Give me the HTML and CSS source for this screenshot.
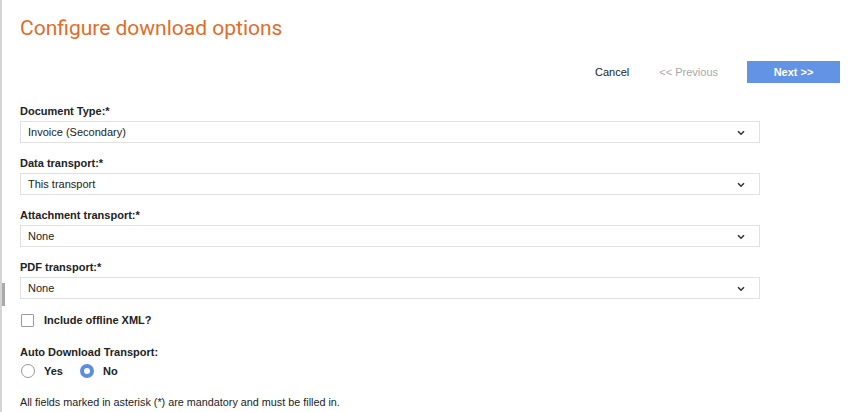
FILE: index.html
```html
<!DOCTYPE html>
<html>
<head>
<meta charset="utf-8">
<link rel="stylesheet" href="styles.css">
</head>
<body>
<div class="page">
  <div class="side-handle"></div>
  <h1 class="title">Configure download options</h1>
  <div class="actions">
    <button class="btn btn-link">Cancel</button>
    <button class="btn btn-link disabled">&lt;&lt; Previous</button>
    <button class="btn btn-primary">Next &gt;&gt;</button>
  </div>
  <form class="form">
    <div class="field">
      <label class="label">Document Type:*</label>
      <div class="select"><span>Invoice (Secondary)</span><svg class="chev" viewBox="0 0 8 6" width="8" height="6"><path d="M1 1.2 L4 4.2 L7 1.2" fill="none" stroke="#333" stroke-width="1.6"/></svg></div>
    </div>
    <div class="field">
      <label class="label">Data transport:*</label>
      <div class="select"><span>This transport</span><svg class="chev" viewBox="0 0 8 6" width="8" height="6"><path d="M1 1.2 L4 4.2 L7 1.2" fill="none" stroke="#333" stroke-width="1.6"/></svg></div>
    </div>
    <div class="field">
      <label class="label">Attachment transport:*</label>
      <div class="select"><span>None</span><svg class="chev" viewBox="0 0 8 6" width="8" height="6"><path d="M1 1.2 L4 4.2 L7 1.2" fill="none" stroke="#333" stroke-width="1.6"/></svg></div>
    </div>
    <div class="field">
      <label class="label">PDF transport:*</label>
      <div class="select"><span>None</span><svg class="chev" viewBox="0 0 8 6" width="8" height="6"><path d="M1 1.2 L4 4.2 L7 1.2" fill="none" stroke="#333" stroke-width="1.6"/></svg></div>
    </div>
    <div class="check-row">
      <span class="checkbox"></span>
      <span class="check-label">Include offline XML?</span>
    </div>
    <div class="radio-group">
      <div class="radio-title">Auto Download Transport:</div>
      <div class="radios">
        <span class="radio"></span><span class="radio-label">Yes</span>
        <span class="radio checked"></span><span class="radio-label">No</span>
      </div>
    </div>
    <p class="note">All fields marked in asterisk (*) are mandatory and must be filled in.</p>
  </form>
</div>
</body>
</html>
```
FILE: styles.css
```css
html, body {
  margin: 0;
  padding: 0;
  background: #fff;
}
body {
  font-family: "Liberation Sans", Arial, sans-serif;
  font-size: 11px;
  color: #222;
}
.page {
  position: relative;
  width: 848px;
  height: 412px;
  border-left: 2px solid #d4d4d4;
  box-sizing: border-box;
  padding-left: 18px;
  overflow: hidden;
}
.side-handle {
  position: absolute;
  left: -2px;
  top: 283px;
  width: 5px;
  height: 23px;
  background: #a9a9a9;
}
.title {
  margin: 0;
  padding-top: 16px;
  font-family: Roboto, "Liberation Sans", sans-serif;
  font-weight: 400;
  font-size: 21px;
  line-height: 25px;
  color: #e06d2a;
}
.actions {
  display: flex;
  justify-content: flex-end;
  align-items: center;
  margin-top: 20px;
  padding-right: 8px;
  height: 22px;
}
.btn {
  font-family: "Liberation Sans", Arial, sans-serif;
  font-size: 11px;
  border: 0;
  background: none;
  padding: 0;
  height: 22px;
  cursor: pointer;
}
.btn-link {
  color: #222;
  margin-right: 30px;
}
.btn-link.disabled {
  color: #a8a8a8;
  margin-right: 29px;
}
.btn-primary {
  width: 93px;
  background: #6393e4;
  color: #fff;
  font-weight: bold;
}
.form {
  margin-top: 22px;
  width: 740px;
}
.field {
  margin-bottom: 14px;
}
.label {
  display: block;
  font-weight: bold;
  line-height: 13px;
  height: 13px;
  margin-bottom: 3px;
}
.select {
  display: flex;
  align-items: center;
  justify-content: space-between;
  height: 22px;
  box-sizing: border-box;
  border: 1px solid #e1e1e1;
  padding: 0 14px 0 7px;
  color: #222;
}
.chev {
  display: block;
  margin-top: 1px;
}
.check-row {
  display: flex;
  align-items: center;
  margin-top: 9px;
  height: 14px;
}
.checkbox {
  width: 13px;
  height: 13px;
  border: 1px solid #9a9a9a;
  box-sizing: border-box;
  margin-left: 1px;
  margin-right: 10px;
  border-radius: 1px;
}
.check-label {
  font-weight: bold;
}
.radio-group {
  margin-top: 19px;
}
.radio-title {
  font-weight: bold;
  line-height: 13px;
}
.radios {
  display: flex;
  align-items: center;
  margin-top: 4px;
  height: 16px;
}
.radio {
  width: 14px;
  height: 14px;
  box-sizing: border-box;
  border: 1px solid #9a9a9a;
  border-radius: 50%;
  margin-left: 1px;
  margin-right: 9px;
}
.radio.checked {
  border: 4px solid #5b8ee0;
  background: #fff;
}
.radio-label {
  font-weight: bold;
  margin-right: 16px;
}
.note {
  margin: 17px 0 0;
  line-height: 13px;
  font-size: 10.8px;
}
```
